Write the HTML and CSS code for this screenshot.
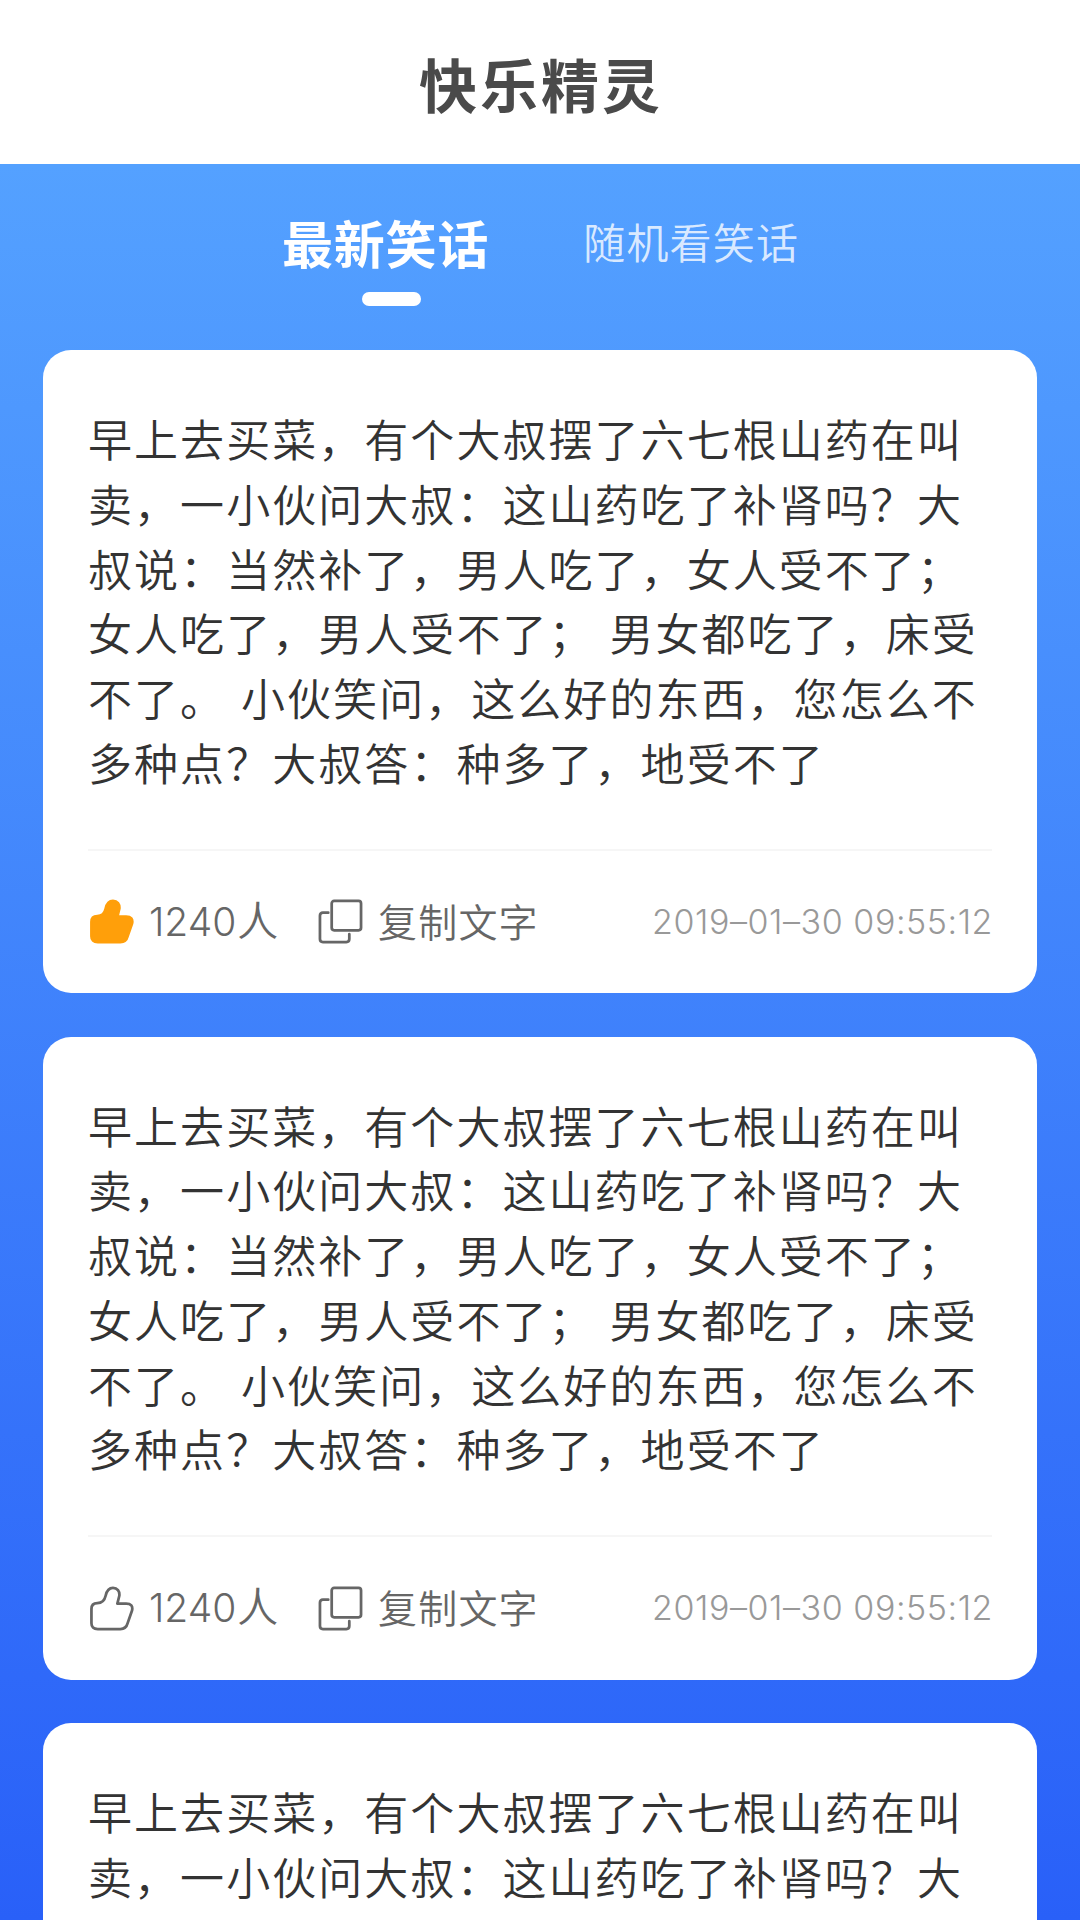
FILE: index.html
```html
<!DOCTYPE html>
<html lang="zh-CN">
	<head>
		<meta charset="UTF-8">
		<title>快乐精灵</title>
		<link rel="stylesheet" href="styles.css">
	</head>

	<body>
		<!-- shared icons -->
		<svg class="sprite" width="0" height="0">
			<symbol id="thumb" viewBox="0 0 46 46">
				<path d="M8.5 17.5C14 17.5 16 14.5 17 10C18 5.500 20.500 2 24.500 2C29 2 31.500 5.500 31 10L29 18H38C43 18 45 20.500 44 25L39.500 38C38.500 42 36 44 32 44H9C4.500 44 2.500 42 2.500 38V23.500C2.500 19.500 4.500 17.500 8.500 17.500Z"/>
			</symbol>
			<symbol id="copy" viewBox="0 0 46 46">
				<rect x="14" y="2" width="30" height="30" rx="2.500"/>
				<path d="M10.500 14H5Q2 14 2 17V41Q2 44 5 44H29Q32 44 32 41V36"/>
			</symbol>
		</svg>

		<header class="title-bar">
			<h1>快乐精灵</h1>
		</header>

		<nav class="tabs">
			<a class="tab active">最新笑话</a>
			<a class="tab">随机看笑话</a>
		</nav>

		<main class="list">
			<article class="card">
				<p class="joke">早上去买菜，有个大叔摆了六七根山药在叫卖，一小伙问大叔：这山药吃了补肾吗？大叔说：当然补了，男人吃了，女人受不了；女人吃了，男人受不了； 男女都吃了，床受不了。 小伙笑问，这么好的东西，您怎么不多种点？大叔答：种多了，地受不了</p>
				<footer class="meta">
					<svg class="icon liked"><use href="#thumb"/></svg>
					<span class="count">1240<span class="unit">人</span></span>
					<svg class="icon"><use href="#copy"/></svg>
					<span class="copy">复制文字</span>
					<time>2019–01–30 09:55:12</time>
				</footer>
			</article>

			<article class="card">
				<p class="joke">早上去买菜，有个大叔摆了六七根山药在叫卖，一小伙问大叔：这山药吃了补肾吗？大叔说：当然补了，男人吃了，女人受不了；女人吃了，男人受不了； 男女都吃了，床受不了。 小伙笑问，这么好的东西，您怎么不多种点？大叔答：种多了，地受不了</p>
				<footer class="meta">
					<svg class="icon"><use href="#thumb"/></svg>
					<span class="count">1240<span class="unit">人</span></span>
					<svg class="icon"><use href="#copy"/></svg>
					<span class="copy">复制文字</span>
					<time>2019–01–30 09:55:12</time>
				</footer>
			</article>

			<article class="card partial">
				<p class="joke">早上去买菜，有个大叔摆了六七根山药在叫卖，一小伙问大叔：这山药吃了补肾吗？大</p>
			</article>
		</main>
	</body>
</html>
```

FILE: styles.css
```css
* {
	box-sizing: border-box;
}

body {
	margin: 0;
	height: 1920px;
	display: flex;
	flex-direction: column;
	font-family: "Noto Sans CJK SC", sans-serif;
	background: linear-gradient(#54a1ff 164px, #2960f8 1920px);
}

.sprite {
	display: none;
}

.title-bar {
	flex: none;
	height: 164px;
	padding: 1px 0 0 2px;
	display: flex;
	align-items: center;
	justify-content: center;
	background-color: #fff;
}

h1 {
	margin: 0;
	font-size: 58px;
	font-weight: 700;
	letter-spacing: 3px;
	line-height: 80px;
	color: #4a4a4a;
}

.tabs {
	flex: none;
	height: 186px;
	padding: 42px 0 0 282px;
	display: flex;
	gap: 94px;
}

.tab {
	height: 100px;
	display: flex;
	flex-direction: column;
	align-items: center;
	font-size: 42px;
	font-weight: 350;
	letter-spacing: 1.2px;
	line-height: 70px;
	color: rgba(255, 255, 255, 0.8);
}

.tab.active {
	font-size: 51px;
	font-weight: 700;
	letter-spacing: 0.8px;
	line-height: 72px;
	color: #fff;
}

.tab.active::after {
	content: '';
	width: 59px;
	height: 15px;
	margin: 14px 0 0 11px;
	border-radius: 8px;
	background-color: #fff;
}

.list {
	flex: 1;
	min-height: 0;
	padding: 0 43px;
	display: flex;
	flex-direction: column;
	gap: 43.5px;
}

.card {
	flex: none;
	height: 643px;
	padding: 56px 45px 0;
	border-radius: 28px;
	background-color: #fff;
}

/* runs off the bottom of the screen */
.card.partial {
	flex: 1;
	height: auto;
	border-radius: 28px 28px 0 0;
}

.joke {
	margin: 0;
	font-size: 44px;
	font-weight: 350;
	letter-spacing: 2.05px;
	word-spacing: 3px;
	line-height: 64.8px;
	color: #333;
}

.meta {
	height: 144px;
	margin-top: 54px;
	border-top: 2px solid #f6f6f6;
	display: flex;
	align-items: center;
	font-size: 39px;
	font-weight: 350;
	line-height: 58px;
	color: #666;
}

.icon {
	width: 45px;
	height: 45px;
	margin-left: 1px;
	fill: none;
	stroke: #666;
	stroke-width: 2.8;
	stroke-linecap: round;
	stroke-linejoin: round;
}

.icon.liked {
	fill: #ff9f0a;
	stroke: #ff9f0a;
}

.count {
	width: 133px;
	margin: 0 35px 0 15px;
	padding-bottom: 4px;
	font-family: Inter, sans-serif;
	font-weight: 300;
	white-space: nowrap;
}

.unit {
	margin-left: 1px;
	font-family: "Noto Sans CJK SC", sans-serif;
	font-size: 41px;
	font-weight: 350;
}

.copy {
	margin-left: 15px;
	padding-bottom: 4px;
	letter-spacing: 1.2px;
}

time {
	margin-right: -1px;
	margin-left: auto;
	font-family: Inter, sans-serif;
	font-size: 34px;
	font-weight: 300;
	letter-spacing: 0.55px;
	color: #999;
}
```
